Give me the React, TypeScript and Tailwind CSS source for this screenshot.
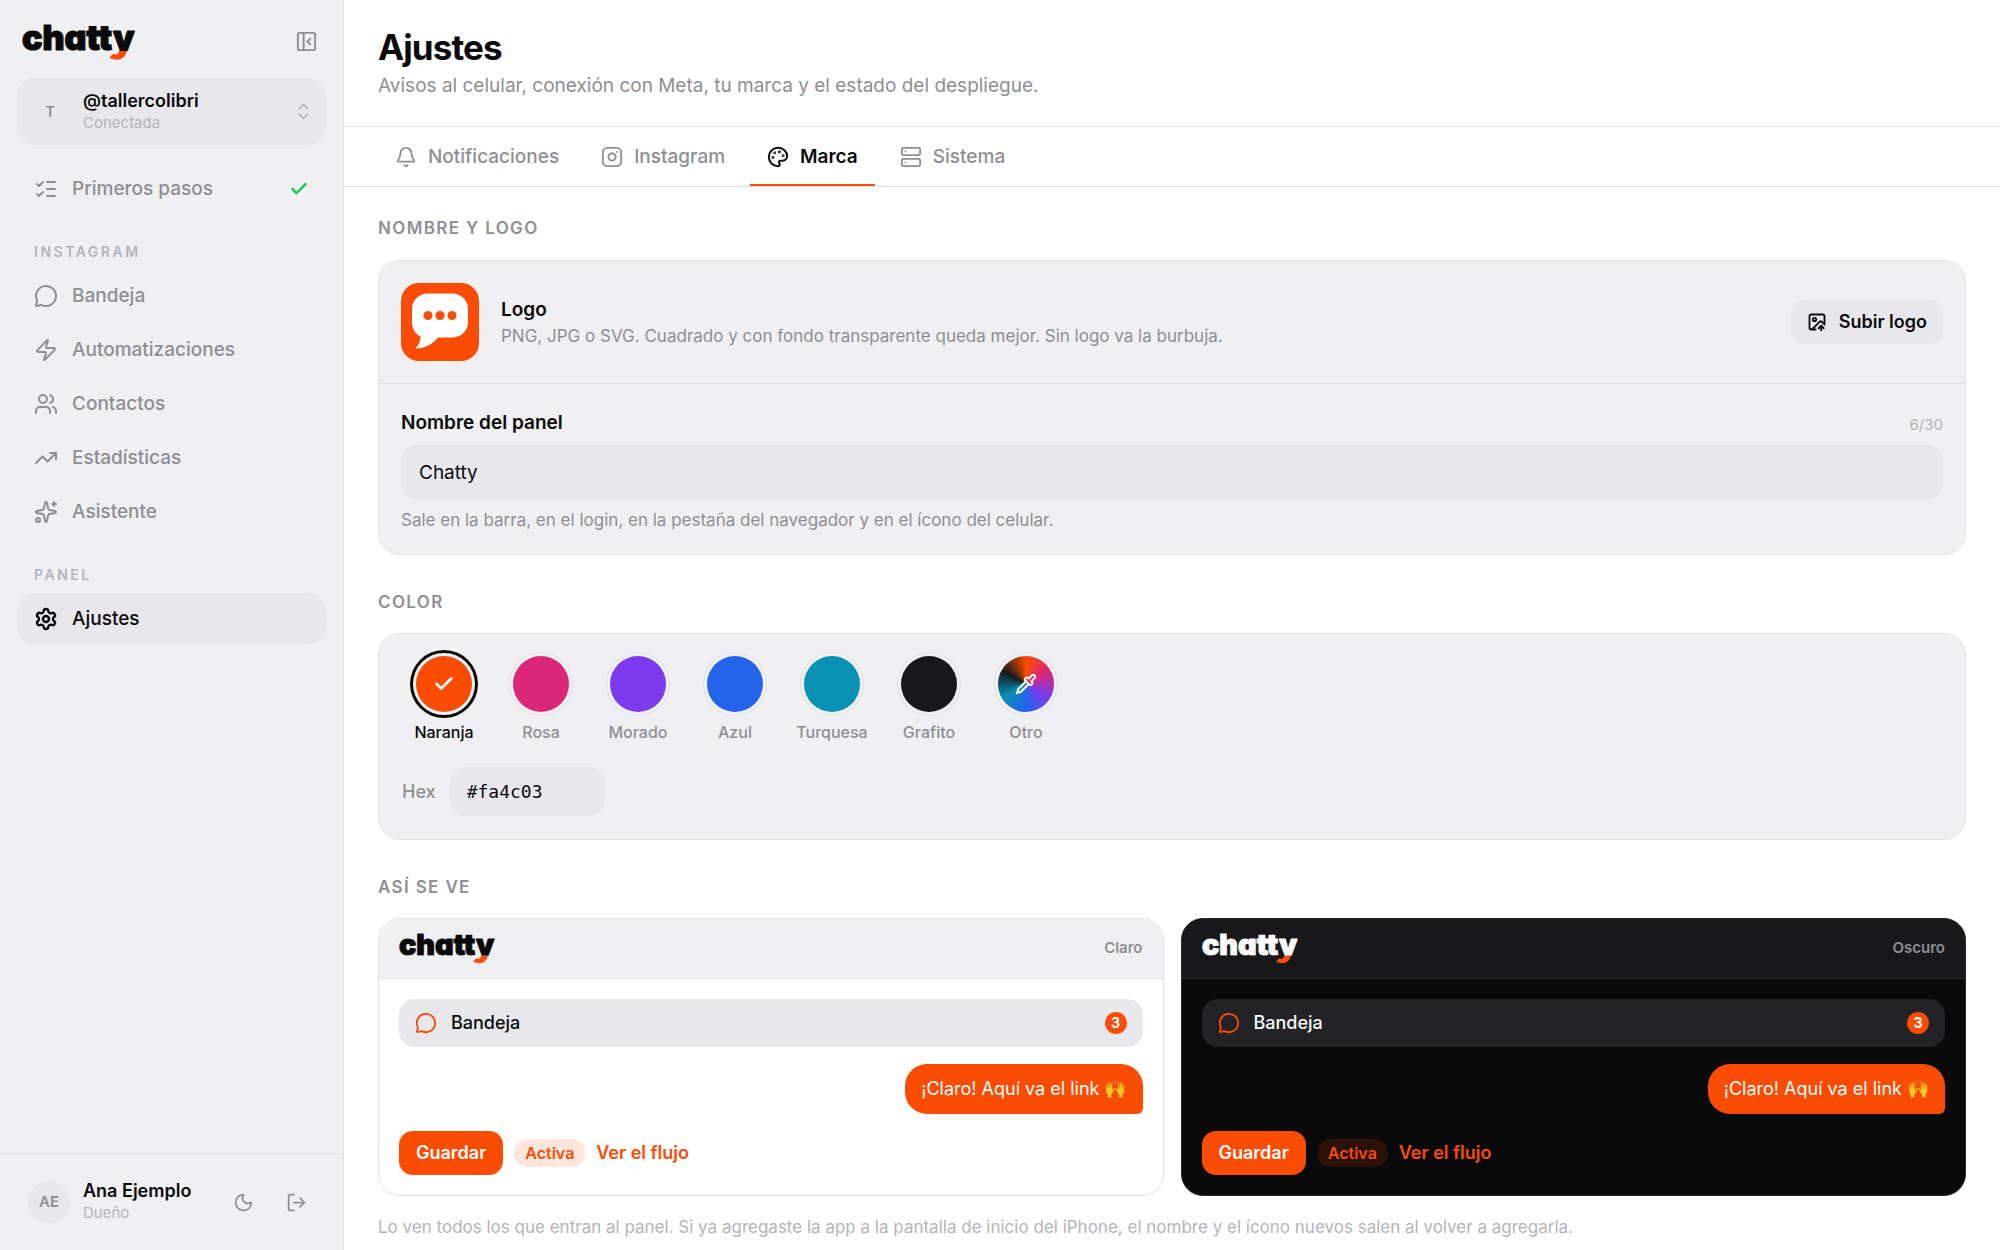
import React, { useState } from "react";
import {
  Bell,
  Check,
  ChevronsUpDown,
  ImageUp,
  Instagram,
  ListChecks,
  LogOut,
  MessageCircle,
  Moon,
  Palette,
  PanelLeftClose,
  Pipette,
  Server,
  Settings,
  Sparkles,
  TrendingUp,
  Users,
  Zap,
} from "lucide-react";
import type { LucideIcon } from "lucide-react";

function Wordmark({ className }: { className: string }) {
  return (
    <svg viewBox="0 0 111 36" role="img" aria-label="chatty" className={className}>
      <defs>
        <clipPath id="wordmark-clip">
          <rect x="-4" y="-4" width="120" height="31" />
        </clipPath>
      </defs>
      <g clipPath="url(#wordmark-clip)">
        <text
          x="0"
          y="26"
          fill="currentColor"
          stroke="currentColor"
          strokeWidth="1.2"
          strokeLinejoin="round"
          className="font-['Inter'] text-[34px] font-black [font-feature-settings:'cv11']"
        >
          chatty
        </text>
      </g>
      <path
        d="M97 27 H105 C103.500 32 100.500 35.800 95 35.800 C92.300 35.800 91 34 87.800 34.600 C88.500 31.300 91 29.500 93.500 30.300 C95.500 30.900 96.500 29 97 27 Z"
        fill="#fa4c03"
      />
    </svg>
  );
}

function NavItem({
  icon: Icon,
  label,
  active,
  done,
}: {
  icon: LucideIcon;
  label: string;
  active?: boolean;
  done?: boolean;
}) {
  return (
    <a
      href="#"
      aria-current={active ? "page" : undefined}
      className={
        active
          ? "flex h-[51px] items-center gap-3.5 rounded-[18px] bg-[#e8e8ec] px-[17px] text-[19px] leading-[31px] font-medium text-[#0a0a0b]"
          : "flex h-[51px] items-center gap-3.5 rounded-[18px] px-[17px] text-[19px] leading-[31px] font-medium text-[#8e8e93]"
      }
    >
      <Icon className="size-6 shrink-0" strokeWidth={active ? 2.4 : 2} />
      <span className="flex-1">{label}</span>
      {done && <Check className="size-5 text-[#22c55e]" strokeWidth={3} />}
    </a>
  );
}

function SidebarLabel({ children }: { children: React.ReactNode }) {
  return (
    <h2 className="px-[17px] text-sm leading-5 font-semibold tracking-[0.18em] text-[#b4b4b9] uppercase">
      {children}
    </h2>
  );
}

function Sidebar() {
  return (
    <aside className="flex w-[344px] shrink-0 flex-col border-r border-[#e2e2e6] bg-[#f0f0f2]">
      <div className="flex items-start justify-between px-[22px] pt-6">
        <a href="#" className="text-[#0a0a0b]">
          <Wordmark className="h-9 w-[111px] overflow-visible" />
        </a>
        <button type="button" aria-label="Contraer barra" className="mt-1.5 mr-[3px] text-[#8e8e93]">
          <PanelLeftClose className="size-[23px]" strokeWidth={2} />
        </button>
      </div>

      <div className="px-[17px] pt-[18px]">
        <button
          type="button"
          className="flex h-[67px] w-full items-center gap-3 rounded-[18px] bg-[#e8e8ec] px-3 text-left"
        >
          <span className="flex size-[42px] items-center justify-center text-sm font-semibold text-[#8e8e93]">
            T
          </span>
          <span className="flex-1">
            <span className="block text-lg leading-[22px] font-semibold text-[#0a0a0b]">@tallercolibri</span>
            <span className="block text-[15px] leading-[22px] text-[#b4b4b9]">Conectada</span>
          </span>
          <ChevronsUpDown className="size-[21px] text-[#b4b4b9]" strokeWidth={2} />
        </button>
      </div>

      <nav className="flex flex-1 flex-col px-[17px] pt-[18px]">
        <NavItem icon={ListChecks} label="Primeros pasos" done />
        <div className="pt-7 pb-2">
          <SidebarLabel>Instagram</SidebarLabel>
        </div>
        <div className="flex flex-col gap-[3px]">
          <NavItem icon={MessageCircle} label="Bandeja" />
          <NavItem icon={Zap} label="Automatizaciones" />
          <NavItem icon={Users} label="Contactos" />
          <NavItem icon={TrendingUp} label="Estadísticas" />
          <NavItem icon={Sparkles} label="Asistente" />
        </div>
        <div className="pt-7 pb-2">
          <SidebarLabel>Panel</SidebarLabel>
        </div>
        <NavItem icon={Settings} label="Ajustes" active />
      </nav>

      <div className="flex h-[97px] items-center border-t border-[#e2e2e6] px-7">
        <span className="flex size-[42px] items-center justify-center rounded-full bg-[#e8e8ec] text-[15px] font-semibold text-[#8e8e93]">
          AE
        </span>
        <div className="ml-[13px] flex-1">
          <p className="text-lg leading-[22px] font-semibold text-[#0a0a0b]">Ana Ejemplo</p>
          <p className="text-[15px] leading-[22px] text-[#b4b4b9]">Dueño</p>
        </div>
        <button type="button" aria-label="Modo oscuro" className="text-[#8e8e93]">
          <Moon className="size-[21px]" strokeWidth={2} />
        </button>
        <button type="button" aria-label="Cerrar sesión" className="mr-2 ml-8 text-[#8e8e93]">
          <LogOut className="size-[21px]" strokeWidth={2} />
        </button>
      </div>
    </aside>
  );
}

const tabs: { icon: LucideIcon; label: string }[] = [
  { icon: Bell, label: "Notificaciones" },
  { icon: Instagram, label: "Instagram" },
  { icon: Palette, label: "Marca" },
  { icon: Server, label: "Sistema" },
];

function Tabs() {
  return (
    <div role="tablist" className="flex h-[60px] gap-2 border-b border-[#e2e2e6] px-[34px]">
      {tabs.map(({ icon: Icon, label }) => {
        const selected = label === "Marca";
        return (
          <button
            key={label}
            type="button"
            role="tab"
            aria-selected={selected}
            className={
              selected
                ? "flex items-center gap-[11px] border-y-2 border-t-transparent border-b-[#fa4c03] px-[17px] text-[19px] leading-[31px] font-semibold text-[#0a0a0b]"
                : "flex items-center gap-[11px] border-y-2 border-transparent px-[17px] text-[19px] leading-[31px] font-medium text-[#8e8e93]"
            }
          >
            <Icon className="size-[22px]" strokeWidth={selected ? 2.2 : 2} />
            {label}
          </button>
        );
      })}
    </div>
  );
}

function SectionTitle({ children }: { children: React.ReactNode }) {
  return (
    <h2 className="text-[17px] leading-6 font-semibold tracking-[0.08em] text-[#8e8e93] uppercase">{children}</h2>
  );
}

function BubbleLogo() {
  return (
    <svg viewBox="0 0 78 78" className="size-[78px] shrink-0" aria-hidden="true">
      <rect width="78" height="78" rx="18" fill="#fa4c03" />
      <path
        d="M27 10.500 H51 C60 10.500 67 17 67 26 V39 C67 48 60 54.500 51 54.500 H37 C32 61 24 65.500 14.500 65.500 C18 61.500 19.500 58 19.500 53.500 C14.500 51 11 46 11 39 V26 C11 17 18 10.500 27 10.500 Z"
        fill="#fff"
      />
      <circle cx="27" cy="32.500" r="4.500" fill="#fa4c03" />
      <circle cx="39" cy="32.500" r="4.500" fill="#fa4c03" />
      <circle cx="51" cy="32.500" r="4.500" fill="#fa4c03" />
    </svg>
  );
}

function BrandCard() {
  const [name, setName] = useState("Chatty");
  return (
    <div className="rounded-[22px] border border-[#e2e2e6] bg-[#f0f0f2]">
      <div className="flex items-center gap-[22px] border-b border-[#e2e2e6] px-[22px] py-[22px]">
        <BubbleLogo />
        <div className="flex-1">
          <p className="text-[19px] leading-7 font-semibold text-[#0a0a0b]">Logo</p>
          <p className="text-[17px] leading-6 text-[#8e8e93]">
            PNG, JPG o SVG. Cuadrado y con fondo transparente queda mejor. Sin logo va la burbuja.
          </p>
        </div>
        <button
          type="button"
          className="flex h-11 items-center gap-3 rounded-[14px] bg-[#e8e8ec] px-4 text-lg font-semibold text-[#0a0a0b]"
        >
          <ImageUp className="size-5" strokeWidth={2.2} />
          Subir logo
        </button>
      </div>
      <div className="px-[22px] pt-[25px] pb-[22px]">
        <div className="flex items-end justify-between">
          <label htmlFor="panel-name" className="text-[19px] leading-7 font-semibold text-[#0a0a0b]">
            Nombre del panel
          </label>
          <span className="text-[15px] leading-6 text-[#b4b4b9]">{name.length}/30</span>
        </div>
        <input
          id="panel-name"
          value={name}
          maxLength={30}
          onChange={(e) => setName(e.target.value)}
          className="mt-2 block h-[55px] w-full rounded-2xl bg-[#e8e8ec] px-[18px] text-[19px] text-[#0a0a0b] outline-none"
        />
        <p className="mt-2 text-[17px] leading-6 text-[#8e8e93]">
          Sale en la barra, en el login, en la pestaña del navegador y en el ícono del celular.
        </p>
      </div>
    </div>
  );
}

const swatches = [
  { label: "Naranja", fill: "bg-[#fa4c03]" },
  { label: "Rosa", fill: "bg-[#db2777]" },
  { label: "Morado", fill: "bg-[#7c3aed]" },
  { label: "Azul", fill: "bg-[#2563eb]" },
  { label: "Turquesa", fill: "bg-[#0891b2]" },
  { label: "Grafito", fill: "bg-[#18181b]" },
  {
    label: "Otro",
    fill: "bg-[conic-gradient(#fa4c03,#db2777,#7c3aed,#2563eb,#0891b2,#18181b,#fa4c03)]",
  },
];

const swatchBase = "flex size-14 items-center justify-center rounded-full text-white ";

function ColorCard() {
  const [hex, setHex] = useState("#fa4c03");
  return (
    <div className="rounded-[22px] border border-[#e2e2e6] bg-[#f0f0f2] px-[23px] pt-[22px] pb-[23px]">
      <div className="flex flex-wrap gap-[13px]">
        {swatches.map(({ label, fill }) => {
          const selected = label === "Naranja";
          return (
            <button
              key={label}
              type="button"
              aria-pressed={selected}
              className={
                selected
                  ? "flex w-[84px] flex-col items-center gap-2 text-base leading-6 font-medium text-[#0a0a0b]"
                  : "flex w-[84px] flex-col items-center gap-2 text-base leading-6 font-medium text-[#8e8e93]"
              }
            >
              <span
                className={
                  swatchBase +
                  fill +
                  (selected
                    ? " shadow-[0_0_0_3px_#f0f0f2,0_0_0_6px_#0a0a0b]"
                    : " shadow-[0_0_0_3px_#f0f0f2,0_0_0_4px_#e2e2e6]")
                }
              >
                {selected && <Check className="size-[22px]" strokeWidth={3} />}
                {label === "Otro" && <Pipette className="size-[22px]" strokeWidth={2.2} />}
              </span>
              {label}
            </button>
          );
        })}
      </div>
      <div className="mt-[23px] flex items-center gap-[14px]">
        <label htmlFor="hex" className="text-lg font-medium text-[#8e8e93]">
          Hex
        </label>
        <input
          id="hex"
          value={hex}
          onChange={(e) => setHex(e.target.value)}
          className="h-[49px] w-[155px] rounded-2xl bg-[#e8e8ec] px-[17px] font-['DejaVu_Sans_Mono',monospace] text-lg text-[#0a0a0b] outline-none"
        />
      </div>
    </div>
  );
}

function Preview({ dark }: { dark?: boolean }) {
  return (
    <div
      className={
        dark
          ? "overflow-hidden rounded-[22px] border border-[#2a2a2e] bg-[#0a0a0b] text-[#fafafa]"
          : "overflow-hidden rounded-[22px] border border-[#e2e2e6] bg-white text-[#0a0a0b]"
      }
    >
      <div
        className={
          dark
            ? "flex h-[60px] items-center justify-between border-b border-[#2a2a2e] bg-[#18181a] px-5"
            : "flex h-[60px] items-center justify-between border-b border-[#e2e2e6] bg-[#f0f0f2] px-5"
        }
      >
        <Wordmark className="h-auto w-[94px] overflow-visible" />
        <span className="text-[15px] font-semibold text-[#8e8e93]">{dark ? "Oscuro" : "Claro"}</span>
      </div>
      <div className="flex flex-col p-5">
        <div
          className={
            dark
              ? "flex h-12 items-center gap-3.5 rounded-2xl bg-[#232327] px-4 text-lg font-medium"
              : "flex h-12 items-center gap-3.5 rounded-2xl bg-[#e8e8ec] px-4 text-lg font-medium"
          }
        >
          <MessageCircle className="size-[22px] text-[#fa4c03]" strokeWidth={2} />
          <span className="flex-1">Bandeja</span>
          <span className="flex size-[22px] items-center justify-center rounded-full bg-[#fa4c03] text-sm font-bold text-white">
            3
          </span>
        </div>
        <p className="mt-[17px] flex h-[50px] items-center self-end rounded-[22px] rounded-br-md bg-[#fa4c03] px-4 text-lg text-white">
          ¡Claro! Aquí va el link 🙌
        </p>
        <div className="mt-[17px] flex items-center gap-[11px]">
          <button type="button" className="h-11 rounded-[14px] bg-[#fa4c03] px-[17px] text-lg font-semibold text-white">
            Guardar
          </button>
          <span
            className={
              dark
                ? "rounded-full bg-[#2a120a] px-[11px] text-base leading-7 font-semibold text-[#fa4c03]"
                : "rounded-full bg-[#fee6dd] px-[11px] text-base leading-7 font-semibold text-[#fa4c03]"
            }
          >
            Activa
          </span>
          <a href="#" className="text-lg font-semibold text-[#fa4c03]">
            Ver el flujo
          </a>
        </div>
      </div>
    </div>
  );
}

export default function App() {
  return (
    <div className="flex min-h-screen bg-white font-['Inter',sans-serif] antialiased">
      <Sidebar />
      <main className="min-w-0 flex-1">
        <header className="h-[127px] border-b border-[#e2e2e6] px-[34px] pt-[26px]">
          <h1 className="text-[35px] leading-[42px] font-bold tracking-tight text-[#0a0a0b]">Ajustes</h1>
          <p className="mt-1 text-[19px] leading-7 text-[#8e8e93]">
            Avisos al celular, conexión con Meta, tu marca y el estado del despliegue.
          </p>
        </header>
        <Tabs />
        <div className="flex flex-col gap-[35px] px-[34px] pt-[29px] pb-2">
          <section className="flex flex-col gap-5">
            <SectionTitle>Nombre y logo</SectionTitle>
            <BrandCard />
          </section>
          <section className="flex flex-col gap-[19px]">
            <SectionTitle>Color</SectionTitle>
            <ColorCard />
          </section>
          <section className="flex flex-col gap-[19px]">
            <SectionTitle>Así se ve</SectionTitle>
            <div className="grid grid-cols-2 gap-[17px]">
              <Preview />
              <Preview dark />
            </div>
            <p className="text-[17px] leading-6 text-[#b4b4b9]">
              Lo ven todos los que entran al panel. Si ya agregaste la app a la pantalla de inicio del iPhone, el nombre y
              el ícono nuevos salen al volver a agregarla.
            </p>
          </section>
        </div>
      </main>
    </div>
  );
}
